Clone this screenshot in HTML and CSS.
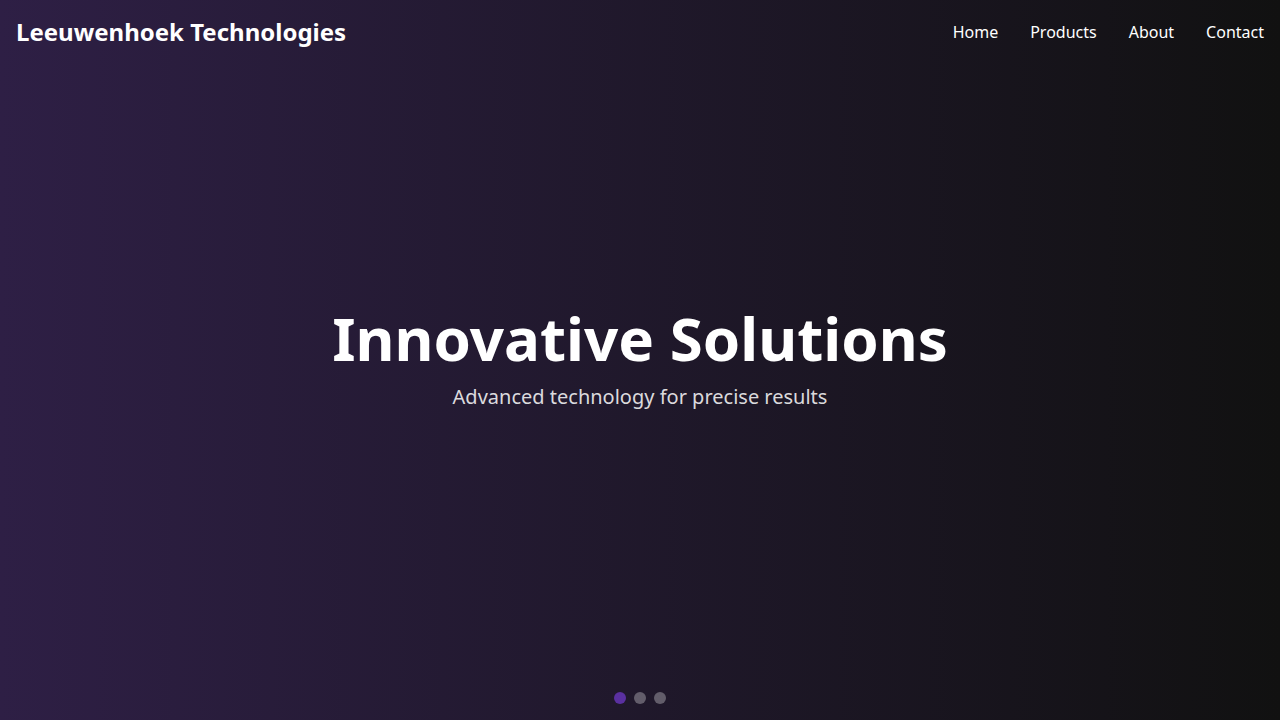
FILE: index.html
```html
<!DOCTYPE html>
<html lang="en">
<head>
<meta charset="utf-8">
<title>Leeuwenhoek Technologies</title>
<link rel="stylesheet" href="styles.css">
</head>
<body>
<header class="site-header">
  <div class="logo">Leeuwenhoek Technologies</div>
  <nav class="nav">
    <a href="#">Home</a>
    <a href="#">Products</a>
    <a href="#">About</a>
    <a href="#">Contact</a>
  </nav>
</header>
<main class="hero">
  <div class="hero-content">
    <h1 class="hero-title">Innovative Solutions</h1>
    <p class="hero-sub">Advanced technology for precise results</p>
  </div>
  <div class="dots">
    <span class="dot active"></span>
    <span class="dot"></span>
    <span class="dot"></span>
  </div>
</main>
</body>
</html>
```
FILE: styles.css
```css
* { box-sizing: border-box; }
html, body { margin: 0; padding: 0; height: 100%; }
body {
  font-family: "Noto Sans", "Open Sans", sans-serif;
  color: #fff;
  background: linear-gradient(to right, #2e1f45 0%, #111111 100%);
  overflow: hidden;
}
.site-header {
  position: absolute;
  top: 0; left: 0; right: 0;
  display: flex;
  justify-content: space-between;
  align-items: center;
  padding: 16px;
  z-index: 2;
}
.logo {
  font-size: 24px;
  font-weight: 700;
  line-height: 32px;
}
.nav {
  display: flex;
  gap: 32px;
}
.nav a {
  color: #fff;
  text-decoration: none;
  font-size: 16px;
  line-height: 32px;
}
.hero {
  position: relative;
  height: 100vh;
  display: flex;
  align-items: center;
  justify-content: center;
  text-align: center;
}
.hero-title {
  margin: 0;
  font-size: 60px;
  font-weight: 700;
  line-height: 1;
}
.hero-sub {
  margin: 14px 0 0;
  font-size: 20px;
  line-height: 1.5;
  color: rgba(255,255,255,0.85);
}
.dots {
  position: absolute;
  bottom: 16px;
  left: 0; right: 0;
  display: flex;
  justify-content: center;
  gap: 8px;
}
.dot {
  width: 12px;
  height: 12px;
  border-radius: 50%;
  background: rgba(255,255,255,0.3);
}
.dot.active { background: #5a30a0; }
```
